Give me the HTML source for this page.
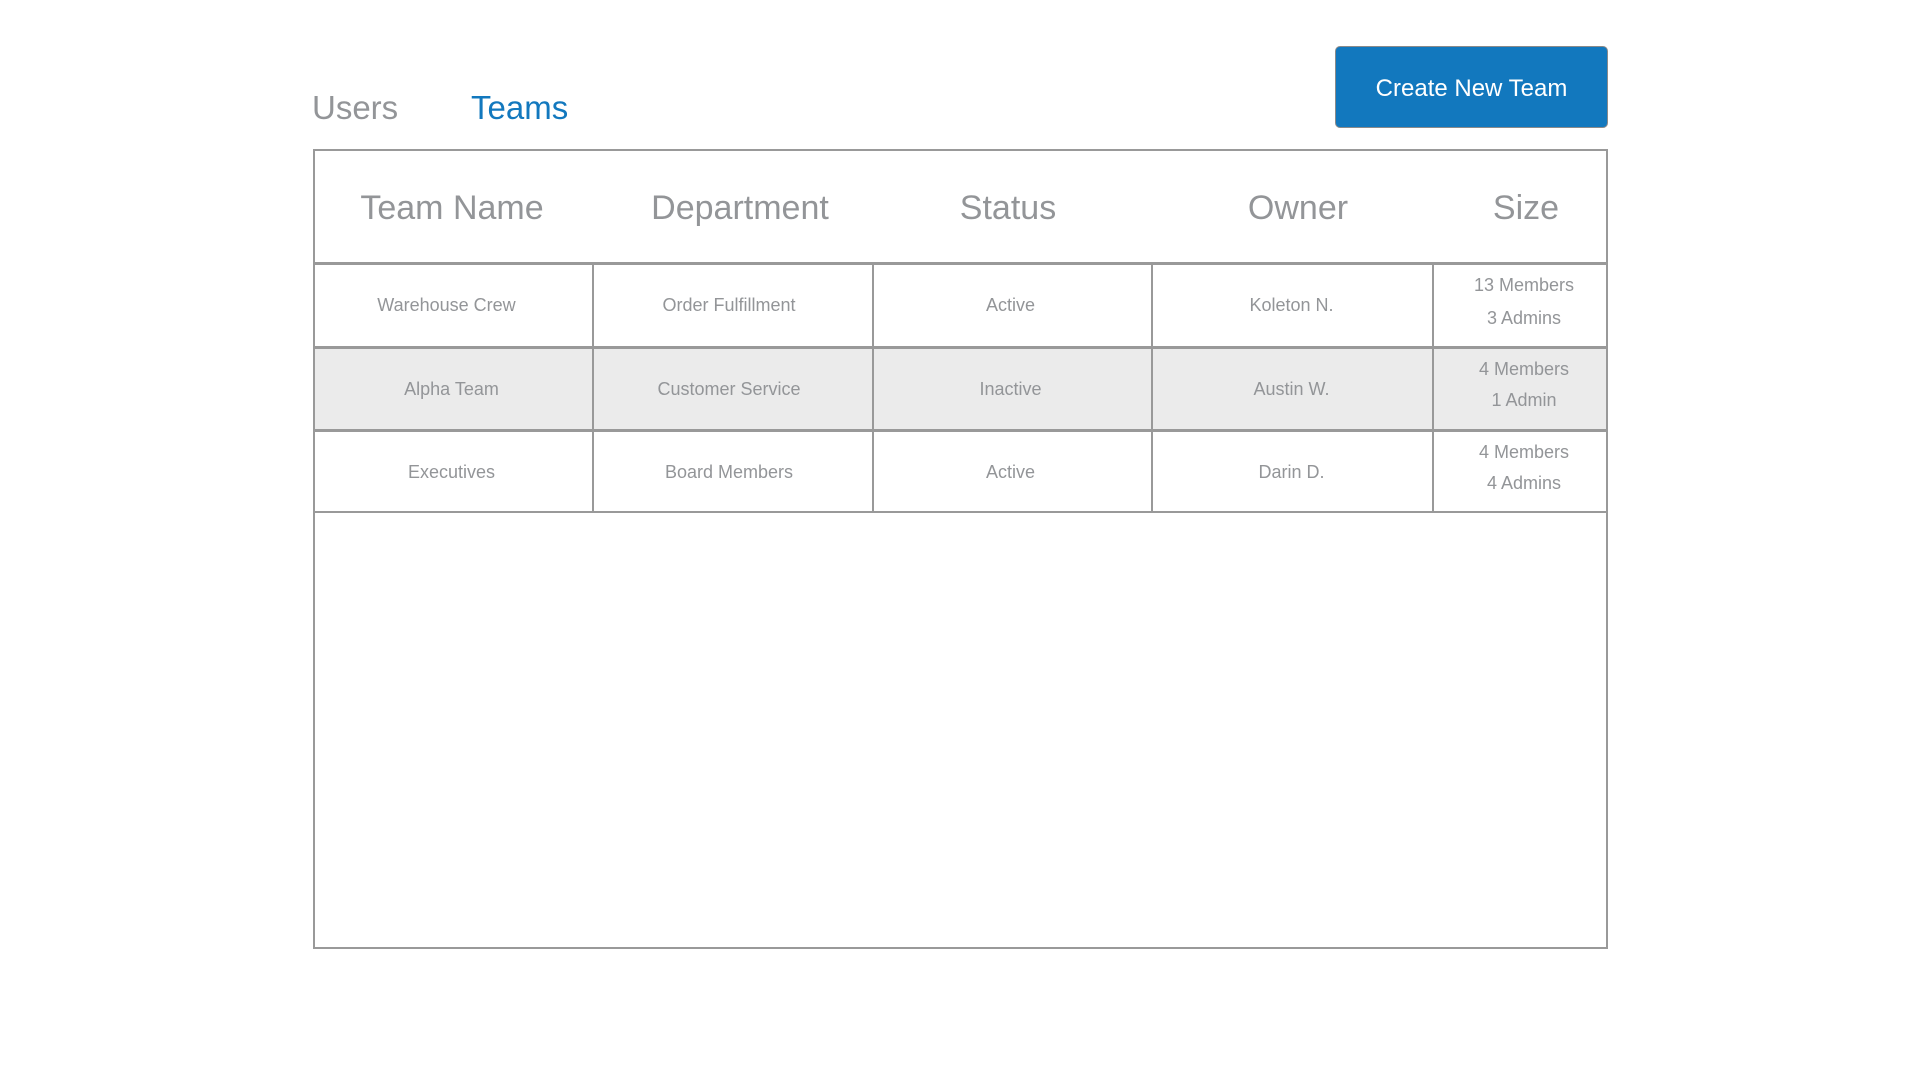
<!DOCTYPE html>
<html><head><style>
body{margin:0;width:1920px;height:1080px;background:#fff;font-family:"Liberation Sans",Arial,sans-serif;position:relative;overflow:hidden}
.a{position:absolute}
.tab{font-size:33px;top:89px}
.btn{left:1335px;top:46px;width:273px;height:82px;background:#1278be;border:1px solid #8a8a8a;box-sizing:border-box;border-radius:5px;color:#fff;font-size:24px;text-align:center;line-height:84px}
.tbl{left:313px;top:149px;width:1295px;height:800px;border:2px solid #999;box-sizing:border-box}
.h{top:189px;font-size:34px;color:#939598;transform:translateX(-50%);white-space:nowrap}
.hl{left:313px;width:1295px;background:#999}
.vl{width:2px;background:#999}
.c{font-size:18px;color:#939598;text-align:center;line-height:32px}
</style></head><body>
<div class="a tab" style="left:312px;color:#939598">Users</div>
<div class="a tab" style="left:471px;color:#1278be">Teams</div>
<div class="a btn">Create New Team</div>
<div class="a tbl"></div>
<div class="a h" style="left:452px">Team Name</div>
<div class="a h" style="left:740px">Department</div>
<div class="a h" style="left:1008px">Status</div>
<div class="a h" style="left:1298px">Owner</div>
<div class="a h" style="left:1526px">Size</div>
<div class="a" style="left:315px;top:349px;width:1291px;height:81px;background:#ebebeb"></div>
<div class="a hl" style="top:262px;height:3px"></div>
<div class="a hl" style="top:346px;height:3px"></div>
<div class="a hl" style="top:429px;height:3px"></div>
<div class="a hl" style="top:511px;height:2px"></div>
<div class="a vl" style="left:592px;top:263px;height:249px"></div>
<div class="a vl" style="left:872px;top:263px;height:249px"></div>
<div class="a vl" style="left:1151px;top:263px;height:249px"></div>
<div class="a vl" style="left:1432px;top:263px;height:249px"></div>

<div class="a c" style="left:308px;width:277px;top:289px">Warehouse Crew</div>
<div class="a c" style="left:590px;width:278px;top:289px">Order Fulfillment</div>
<div class="a c" style="left:872px;width:277px;top:289px">Active</div>
<div class="a c" style="left:1152px;width:279px;top:289px">Koleton N.</div>
<div class="a c" style="left:1438px;width:172px;top:269px;line-height:33px">13 Members<br>3 Admins</div>

<div class="a c" style="left:313px;width:277px;top:373px">Alpha Team</div>
<div class="a c" style="left:590px;width:278px;top:373px">Customer Service</div>
<div class="a c" style="left:872px;width:277px;top:373px">Inactive</div>
<div class="a c" style="left:1152px;width:279px;top:373px">Austin W.</div>
<div class="a c" style="left:1438px;width:172px;top:354px;line-height:31px">4 Members<br>1 Admin</div>

<div class="a c" style="left:313px;width:277px;top:456px">Executives</div>
<div class="a c" style="left:590px;width:278px;top:456px">Board Members</div>
<div class="a c" style="left:872px;width:277px;top:456px">Active</div>
<div class="a c" style="left:1152px;width:279px;top:456px">Darin D.</div>
<div class="a c" style="left:1438px;width:172px;top:437px;line-height:31px">4 Members<br>4 Admins</div>
</body></html>
